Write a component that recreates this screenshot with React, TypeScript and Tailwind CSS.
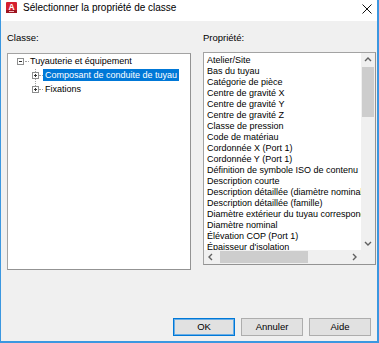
import React from 'react';

const properties = [
  'Atelier/Site',
  'Bas du tuyau',
  'Catégorie de pièce',
  'Centre de gravité X',
  'Centre de gravité Y',
  'Centre de gravité Z',
  'Classe de pression',
  'Code de matériau',
  'Cordonnée X (Port 1)',
  'Cordonnée Y (Port 1)',
  'Définition de symbole ISO de contenu',
  'Description courte',
  'Description détaillée (diamètre nominal)',
  'Description détaillée (famille)',
  'Diamètre extérieur du tuyau correspondant',
  'Diamètre nominal',
  'Élévation COP (Port 1)',
  "Épaisseur d'isolation",
];

const Expander = ({ open }: { open: boolean }) => (
  <svg width="7" height="7" viewBox="0 0 7 7" className="shrink-0">
    <rect x="0.5" y="0.5" width="6" height="6" fill="#fff" stroke="#8e8f8f" />
    <line x1="2" y1="3.5" x2="5" y2="3.5" stroke="#333" />
    {!open && <line x1="3.5" y1="2" x2="3.5" y2="5" stroke="#333" />}
  </svg>
);

const Chevron = ({ dir }: { dir: 'up' | 'down' | 'left' | 'right' }) => {
  const pts = {
    up: '1,5 4,2 7,5',
    down: '1,3 4,6 7,3',
    left: '5,1 2,4 5,7',
    right: '3,1 6,4 3,7',
  }[dir];
  return (
    <svg width="8" height="8" viewBox="0 0 8 8">
      <polyline points={pts} fill="none" stroke="#606060" strokeWidth="1.4" />
    </svg>
  );
};

export default function App() {
  return (
    <div
      className="w-[379px] h-[343px] flex flex-col bg-[#f0f0f0] border-l border-r-2 border-b-2 border-[#3b97e0] text-black text-[9px]"
      style={{ fontFamily: '"Liberation Sans", Arial, sans-serif' }}
    >
      {/* Title bar */}
      <div className="h-[21px] bg-white flex items-start pt-[2px] pl-[5px] pr-[5px]">
        <svg width="11" height="11" viewBox="0 0 11 11" className="shrink-0">
          <rect x="0" y="0" width="11" height="11" rx="1" fill="#d5202f" />
          <rect x="0" y="8" width="11" height="3" fill="#9e1420" />
          <text x="5.5" y="7.6" textAnchor="middle" fontSize="8.5" fontWeight="bold" fill="#fff" fontFamily="Liberation Sans, Arial, sans-serif">A</text>
          <rect x="3" y="9" width="5" height="1" fill="#f3b7bc" />
        </svg>
        <span className="ml-[6px] text-[10px] leading-[12px]">Sélectionner la propriété de classe</span>
        <svg width="10" height="10" viewBox="0 0 10 10" className="ml-auto mt-[2px]">
          <line x1="0.5" y1="0.5" x2="9.5" y2="9.5" stroke="#111" />
          <line x1="9.5" y1="0.5" x2="0.5" y2="9.5" stroke="#111" />
        </svg>
      </div>

      {/* Body */}
      <div className="flex-1 flex flex-col pl-[6px] pr-[1px] pt-[10px] pb-[5px]">
        <div className="flex gap-[12px]">
          {/* Classe */}
          <div className="w-[184px] flex flex-col">
            <div className="h-[13px] leading-[13px] text-[9.5px]">Classe:</div>
            <div className="mt-[9px] h-[217px] bg-white border border-[#a3a3a3] border-r-[#939393] border-b-[#939393] relative">
              <div className="absolute left-[27px] top-[15px] h-[21px] border-l border-dotted border-[#a0a0a0]" />
              <div className="h-[14px] flex items-center pl-[9px]">
                <Expander open />
                <div className="w-[4px] ml-[1px] border-t border-dotted border-[#a0a0a0]" />
                <span className="ml-[1px] leading-[13px]">Tuyauterie et équipement</span>
              </div>
              <div className="h-[14px] flex items-center pl-[24px] relative">
                <Expander open={false} />
                <div className="w-[4px] border-t border-dotted border-[#a0a0a0]" />
                <span className="bg-[#0078d7] text-white px-[2px] leading-[12px]">Composant de conduite de tuyau</span>
              </div>
              <div className="h-[14px] flex items-center pl-[24px] relative">
                <Expander open={false} />
                <div className="w-[4px] border-t border-dotted border-[#a0a0a0]" />
                <span className="px-[2px] leading-[12px]">Fixations</span>
              </div>
            </div>
          </div>

          {/* Propriété */}
          <div className="w-[173px] flex flex-col">
            <div className="h-[13px] leading-[13px] text-[9.5px]">Propriété:</div>
            <div className="mt-[8px] h-[213px] bg-white border border-[#a3a3a3] border-r-[#939393] border-b-[#939393] flex flex-col">
              <div className="flex flex-1 min-h-0">
                <div className="flex-1 min-w-0 overflow-hidden pl-[3px] pt-[1.5px]">
                  {properties.map((p) => (
                    <div key={p} className="h-[11px] leading-[11px] whitespace-nowrap">
                      {p}
                    </div>
                  ))}
                </div>
                <div className="w-[14px] bg-[#f0f0f0] flex flex-col">
                  <div className="h-[14px] flex items-center justify-center">
                    <Chevron dir="up" />
                  </div>
                  <div className="mx-[1px] h-[50px] bg-[#cdcdcd]" />
                  <div className="flex-1" />
                  <div className="h-[14px] flex items-center justify-center">
                    <Chevron dir="down" />
                  </div>
                </div>
              </div>
              <div className="h-[14px] flex bg-[#f0f0f0]">
                <div className="w-[14px] flex items-center justify-center">
                  <Chevron dir="left" />
                </div>
                <div className="ml-[2px] my-[1px] w-[88px] bg-[#cdcdcd]" />
                <div className="flex-1" />
                <div className="w-[14px] flex items-center justify-center">
                  <Chevron dir="right" />
                </div>
                <div className="w-[14px]" />
              </div>
            </div>
          </div>
        </div>

        {/* Buttons */}
        <div className="mt-auto flex justify-end gap-[6px] pr-[5px]">
          <button className="w-[62px] h-[18px] bg-[#e1e1e1] border border-[#0078d7] shadow-[inset_0_0_0_1px_#6aaee6] text-[9.5px] leading-[16px]">
            OK
          </button>
          <button className="w-[62px] h-[18px] bg-[#e1e1e1] border border-[#adadad] text-[9.5px] leading-[16px]">
            Annuler
          </button>
          <button className="w-[62px] h-[18px] bg-[#e1e1e1] border border-[#adadad] text-[9.5px] leading-[16px]">
            Aide
          </button>
        </div>
      </div>
    </div>
  );
}
